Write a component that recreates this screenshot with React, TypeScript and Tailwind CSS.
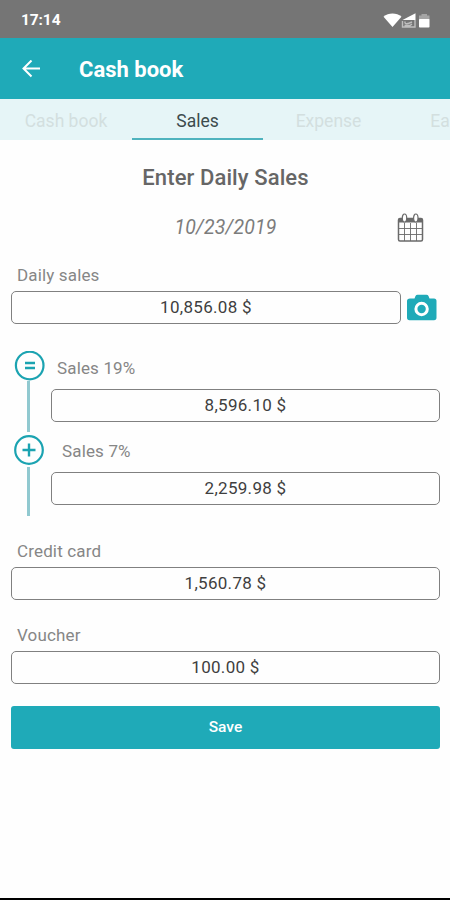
import React from "react";

const tabs = [
  { name: "Cash book", style: "w-[132px] text-[#d3dfdf]" },
  { name: "Sales", style: "w-[131px] text-[#3c4b4d] border-b-2 border-[#4fb3be] pt-[2px]" },
  { name: "Expense", style: "w-[131px] text-[#d3dfdf]" },
  { name: "Ea", style: "w-[56px] text-[#d3dfdf] pl-[36px]" },
];

const Label = ({ text, className = "" }: { text: string; className?: string }) => (
  <div className={`h-6 leading-6 text-[17px] tracking-[0.15px] text-[#868686] ${className}`}>{text}</div>
);

const Field = ({ value, className = "" }: { value: string; className?: string }) => (
  <div
    className={`h-[33px] flex items-center justify-center rounded-[5px] border-[1.5px] border-[#808080] text-[17px] tracking-[0.3px] text-[#3f3f3f] ${className}`}
  >
    {value}
  </div>
);

const StatusBar = () => (
  <div className="h-[38px] shrink-0 bg-[#757575] flex items-center justify-between pl-[21px] pr-[19px] pt-[3px] text-white">
    <span className="text-[15.5px] font-bold tracking-[-0.1px]">17:14</span>
    <svg width="48" height="16" viewBox="0 0 48 16">
      <path d="M0.500 3.800C5.500-.5 13.500-.5 18.500 3.800L9.500 14Z" fill="#fff" />
      <path d="M19.500 7 32.500.300V7Z" fill="#fff" />
      <path d="M19.500 8V14H32V7M22 8.500C21.500 12 25 11 29 9M21.500 12.500H27L29 11" fill="none" stroke="#bebebe" strokeWidth="1.400" />
      <path d="M36 2.500H38.500V1H44V2.500H46.500V7H36Z" fill="#a5a5a5" />
      <rect x="36" y="6" width="10.500" height="8.500" rx=".8" fill="#fff" />
    </svg>
  </div>
);

const CalendarIcon = () => (
  <svg width="28" height="30" viewBox="0 0 28 30" fill="none" stroke="#6a6a6a">
    <rect x="1.500" y="5.500" width="24" height="22.500" rx="1.500" strokeWidth="1.500" />
    <path d="M2 7.500H25" strokeWidth="4" />
    <path d="M2 15.500H25M2 21.500H25M7.500 10V28M13.500 10V28M19.500 10V28" strokeWidth=".9" />
    <ellipse cx="7.500" cy="5" rx="2.200" ry="4" fill="#fff" strokeWidth="1.200" />
    <ellipse cx="18.800" cy="5" rx="2.200" ry="4" fill="#fff" strokeWidth="1.200" />
  </svg>
);

const CameraIcon = () => (
  <svg width="30" height="27" viewBox="0 0 30 27">
    <path
      d="M3 4.500H7.500L8.500 2Q9.200.700 10.500.700H19.500Q20.800.700 21.500 2L22.500 4.500H27Q29.500 4.500 29.500 7V23.500Q29.500 26.200 27 26.200H2.500Q0 26.200 0 23.500V7Q0 4.500 3 4.500Z"
      fill="#1faab8"
    />
    <circle cx="14.600" cy="15" r="5.700" fill="none" stroke="#fff" strokeWidth="3" />
  </svg>
);

const App = () => {
  return (
    <div className="w-[450px] h-[900px] flex flex-col overflow-hidden bg-[#fefefe] border-b-2 border-black font-['Roboto',sans-serif]">
      <StatusBar />

      <header className="h-[61px] shrink-0 bg-[#1faab8] flex items-center pl-[22px] text-white">
        <svg width="19" height="18" viewBox="0 0 19 18" fill="none" stroke="#fff" strokeWidth="2">
          <path d="M18 8.500H2M9.500.500 1.500 8.500 9.500 16.500" />
        </svg>
        <h1 className="ml-[38px] text-[22px] font-bold pt-[1px]">Cash book</h1>
      </header>

      <nav className="h-[41px] shrink-0 flex overflow-hidden bg-[#e6f5f7]">
        {tabs.map((tab) => (
          <div
            key={tab.name}
            className={`shrink-0 flex items-center justify-center text-[17.5px] leading-6 ${tab.style}`}
          >
            <span className="pt-[2px]">{tab.name}</span>
          </div>
        ))}
      </nav>

      <main className="flex flex-col pl-[11px] pr-[10px]">
        <h2 className="mt-5 h-9 leading-9 text-center text-[22px] font-medium tracking-[0.1px] text-[#666]">
          Enter Daily Sales
        </h2>

        <div className="mt-[14px] h-9 grid grid-cols-[1fr_auto_1fr] items-center">
          <span className="col-start-2 text-[19.5px] tracking-[0.15px] italic text-[#7c7c7c]">10/23/2019</span>
          <span className="justify-self-end mr-[15px]">
            <CalendarIcon />
          </span>
        </div>

        <Label text="Daily sales" className="mt-[17px] ml-[6px] mb-1" />
        <div className="flex items-center">
          <Field value="10,856.08 $" className="w-[390px]" />
          <span className="ml-[6px]">
            <CameraIcon />
          </span>
        </div>

        <div className="mt-[27px] flex h-[165px]">
          <svg width="40" height="165" viewBox="0 0 40 165" className="shrink-0" fill="none" stroke="#1ba3b1">
            <path d="M17.500 30V81M17.500 116V165" stroke="#91c9d0" strokeWidth="3" />
            <circle cx="18.700" cy="14.500" r="13.800" strokeWidth="2.200" />
            <path d="M14 12H24M14 17H24" strokeWidth="2.400" />
            <circle cx="18" cy="99" r="13.800" strokeWidth="2.200" />
            <path d="M11.500 99H24.500M18 92.500V105.500" strokeWidth="2.400" />
          </svg>
          <div className="grow pt-[5px]">
            <Label text="Sales 19%" className="ml-[6px] mb-[9px]" />
            <Field value="8,596.10 $" />
            <Label text="Sales 7%" className="mt-[17px] ml-[11px] mb-[9px]" />
            <Field value="2,259.98 $" />
          </div>
        </div>

        <Label text="Credit card" className="mt-[23px] ml-[6px] mb-1" />
        <Field value="1,560.78 $" />

        <Label text="Voucher" className="mt-[23px] ml-[6px] mb-1" />
        <Field value="100.00 $" />

        <button className="mt-[22px] h-[43px] rounded-[3px] bg-[#1faab8] text-white text-[15.5px] font-medium">
          Save
        </button>
      </main>
    </div>
  );
};

export default App;
